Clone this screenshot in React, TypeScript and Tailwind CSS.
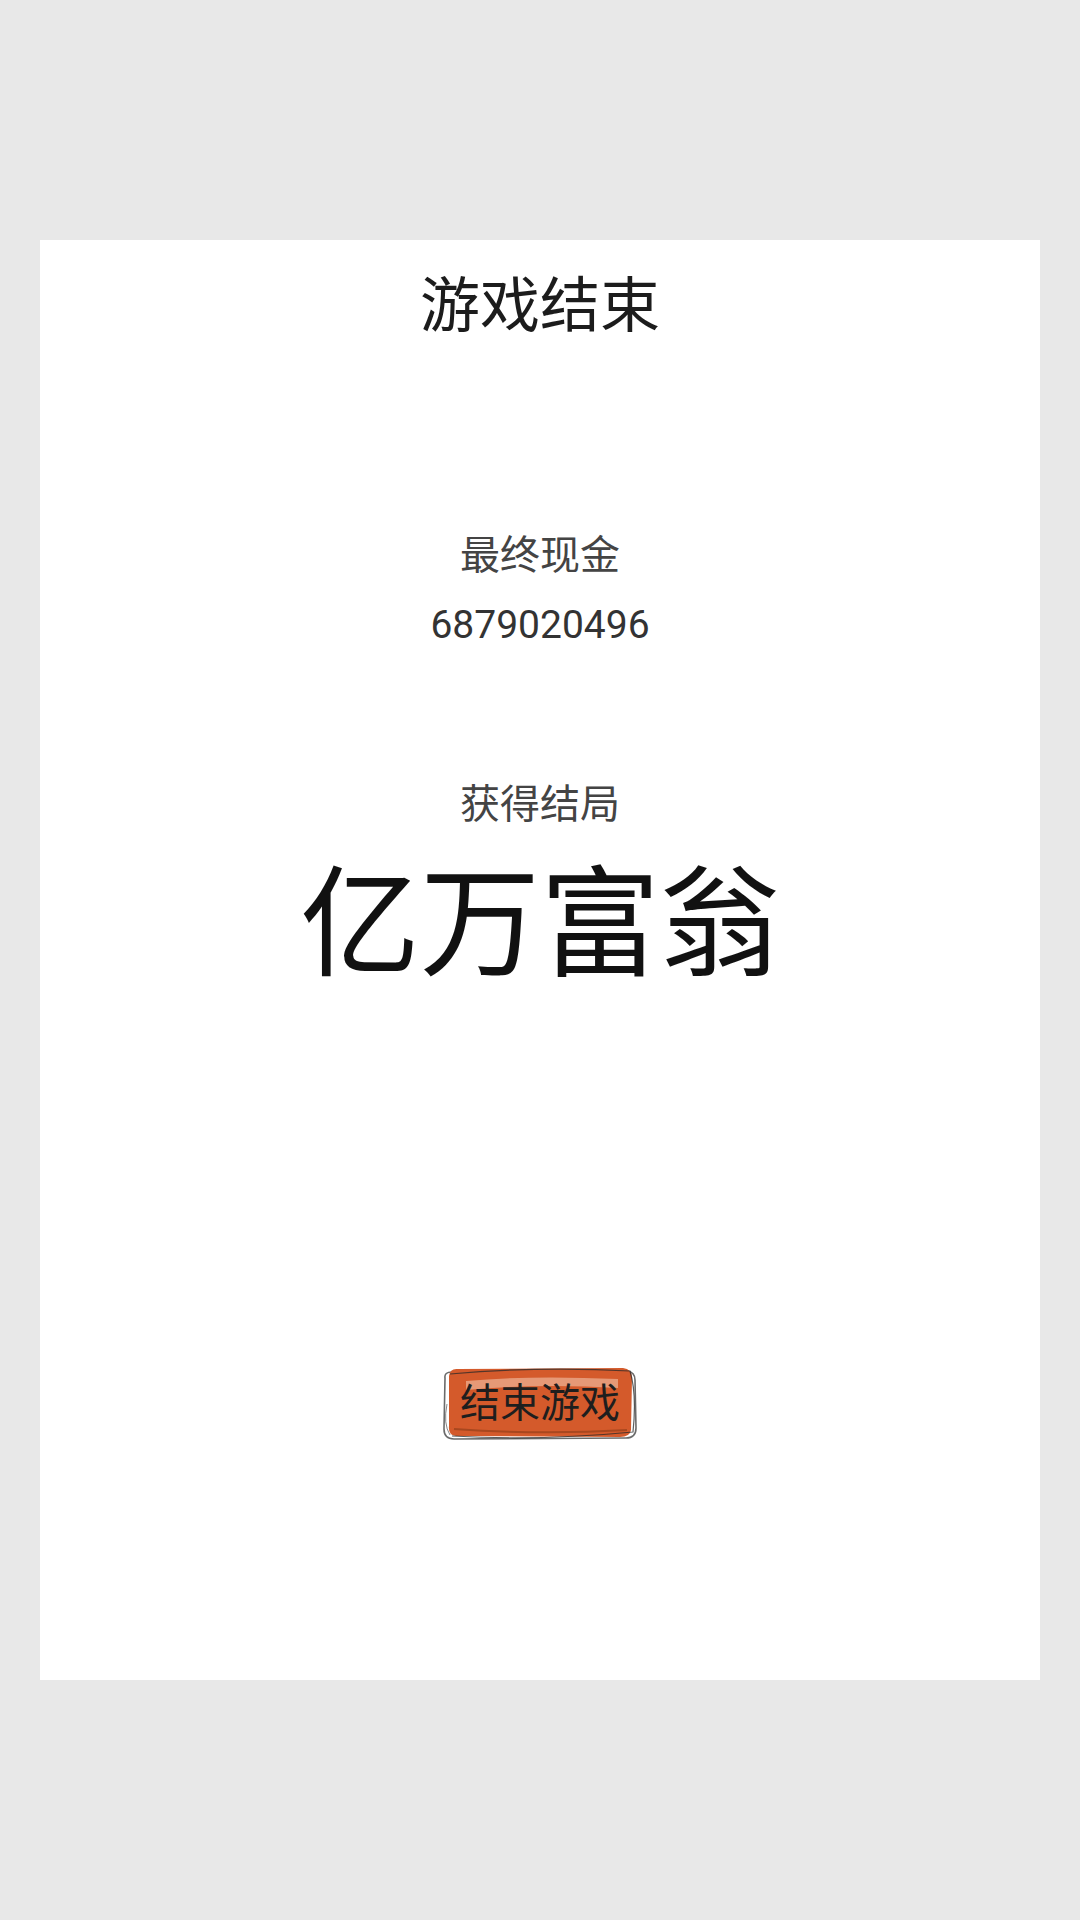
import React from "react";

const cjk = { fontFamily: 'Roboto, "Noto Sans CJK SC", sans-serif' };

function SketchButton() {
  return (
    <button className="relative w-[200px] h-[80px] flex items-center justify-center" style={cjk}>
      <svg className="absolute inset-0" width="200" height="80" viewBox="0 0 200 80" fill="none">
        <path d="M5 14 Q4 8 12 8 L187 7 Q195 8 195 16 L196 64 Q196 74 186 74 L14 75 Q4 75 4 65 Z" stroke="#6b6b6b" strokeWidth="1.6" />
        <path d="M9 12 Q10 4 18 5 L183 4 Q192 5 192 14 L191 66 Q190 73 180 73 L16 72 Q8 71 9 62 Z" fill="#d45a2b" />
        <path d="M26 17 Q90 11 178 15 L178 24 Q100 19 26 26 Z" fill="#e9a585" opacity="0.85" />
        <path d="M14 65 Q100 71 187 66" stroke="#8a3a18" strokeWidth="2" opacity="0.6" />
        <path d="M10 10 Q100 2 190 7 Q197 30 193 68 Q100 77 12 72" stroke="#2a2a2a" strokeWidth="1.2" opacity="0.75" />
        <path d="M7 40 Q3 60 10 71" stroke="#555" strokeWidth="1" opacity="0.7" />
      </svg>
      <span className="relative text-[40px] leading-[56px] text-[#1e1e1e]">结束游戏</span>
    </button>
  );
}

export default function App() {
  return (
    <div className="w-[1080px] h-[1920px] bg-[#e8e8e8] flex items-center justify-center">
      <div className="w-[1000px] h-[1440px] bg-white flex flex-col items-center pt-[27px]" style={cjk}>
        <div className="text-[60px] leading-[80px] text-[#1c1c1c]">游戏结束</div>
        <div className="mt-[181px] text-[40px] leading-[56px] text-[#444]">最终现金</div>
        <div className="mt-[13px] text-[39px] leading-[56px] text-[#333]">6879020496</div>
        <div className="mt-[124px] text-[40px] leading-[56px] text-[#444]">获得结局</div>
        <div className="mt-[23px] text-[120px] leading-[140px] text-[#111]">亿万富翁</div>
        <div className="mt-[368px]">
          <SketchButton />
        </div>
      </div>
    </div>
  );
}
